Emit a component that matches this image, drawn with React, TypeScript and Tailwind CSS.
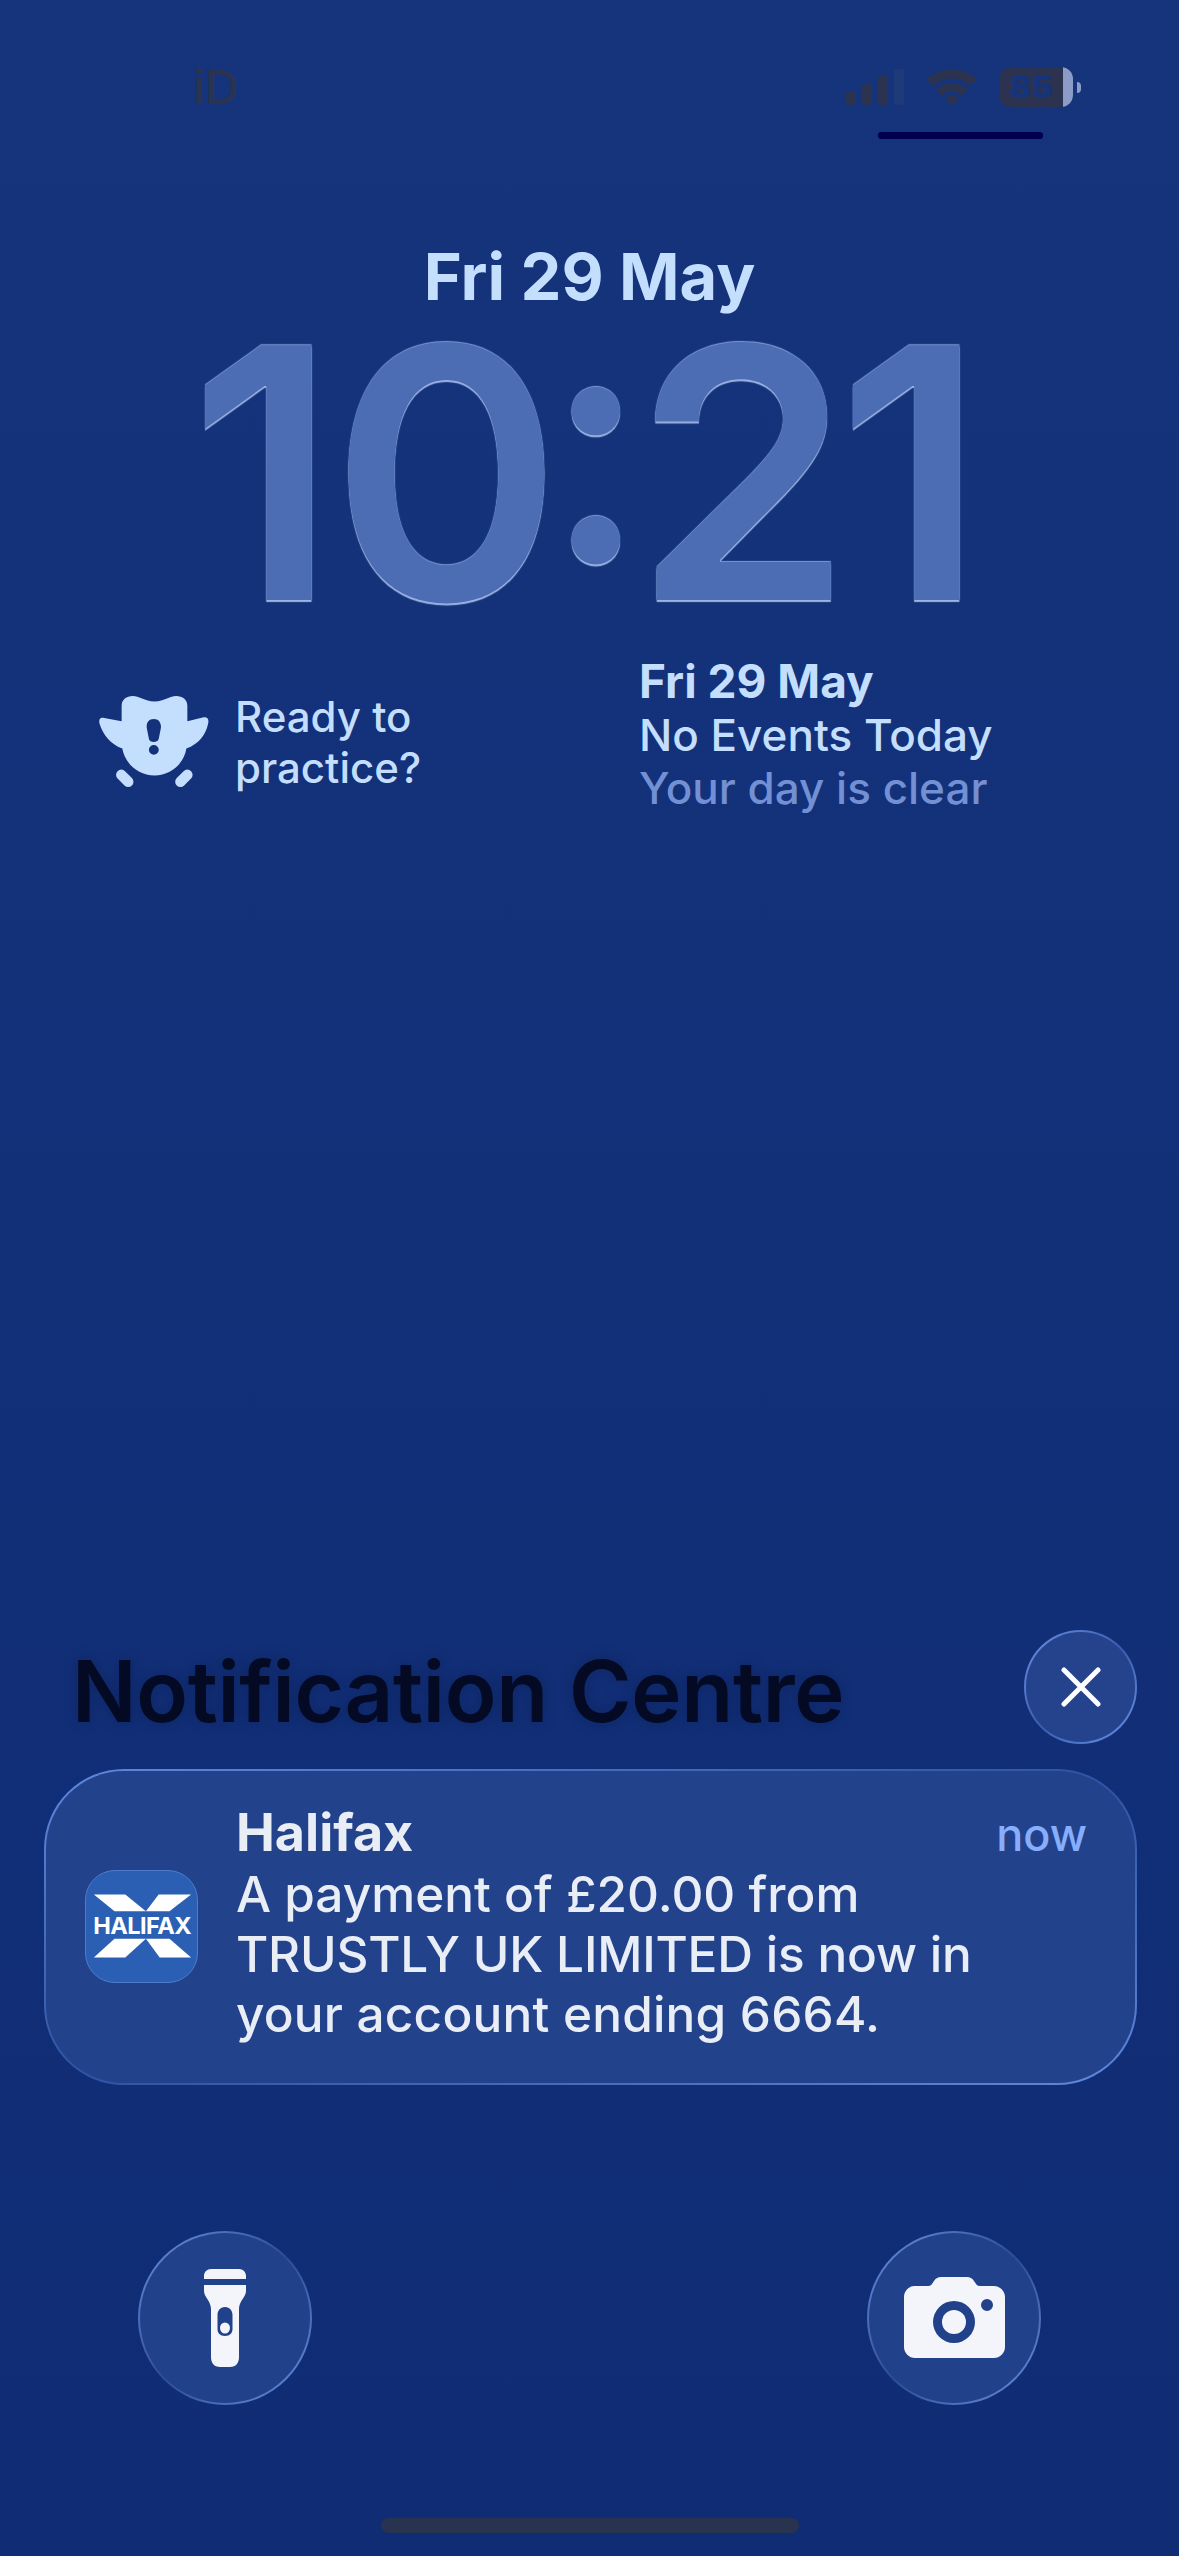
function SignalIcon() {
  return (
    <svg width="58" height="36" viewBox="0 0 58 36" className="block">
      <rect x="0" y="22" width="10" height="14" rx="3" fill="#2b3350" />
      <rect x="16" y="15" width="10" height="21" rx="3" fill="#2b3350" />
      <rect x="32" y="7" width="10" height="29" rx="3" fill="#2b3350" />
      <rect x="48" y="0" width="10" height="36" rx="3" fill="#1f3a79" />
    </svg>
  );
}

function WifiIcon() {
  return (
    <svg width="50" height="37" viewBox="0 0 50 37" className="block">
      <path d="M0 10 C14 -3 36 -3 50 10 L44 17 C32 7 18 7 6 17 Z" fill="#2b3350" />
      <path d="M9 20 C18 12 32 12 41 20 L35 27 C28 21 22 21 15 27 Z" fill="#2b3350" />
      <path d="M18 29 C22 26 28 26 32 29 L25 37 Z" fill="#2b3350" />
    </svg>
  );
}

function Battery() {
  return (
    <div className="flex items-center gap-[4px]">
      <div className="flex h-[40px] w-[74px] overflow-hidden rounded-[12px] bg-[#2b3350]">
        <div className="flex-1 text-center text-[32px] font-black leading-[40px] text-[#15347c]">85</div>
        <div className="w-[10px] bg-[#8b9cc8]" />
      </div>
      <div className="h-[11px] w-[4px] rounded-r-full bg-[#8b9cc8]" />
    </div>
  );
}

function PracticeIcon() {
  return (
    <svg width="112" height="92" viewBox="56 42 335 280" className="block shrink-0">
      <path
        fillRule="evenodd"
        fill="#c4defe"
        d="M125 75 C125 50 150 40 175 48 C195 55 210 62 225 62 C240 62 255 55 275 48 C300 40 325 50 325 75 L325 122 L375 110 C385 108 392 115 388 130 C380 165 360 190 322 205 C315 250 275 287 225 287 C175 287 135 250 127 205 C90 190 70 165 58 130 C54 115 60 108 72 112 L125 122 Z M223 115 C205 115 199 130 202 145 L208 175 C210 188 235 188 238 175 L244 145 C247 130 240 115 223 115 Z M223 194 A15 15 0 1 0 223 224 A15 15 0 1 0 223 194 Z"
      />
      <path d="M124 285 L145 306 M325 285 L304 306" stroke="#c4defe" strokeWidth="32" strokeLinecap="round" />
    </svg>
  );
}

function HalifaxLogo() {
  return (
    <div className="flex h-[113px] w-[113px] shrink-0 items-center justify-center rounded-[30px] border border-[#4f7cc9] bg-[#2a5fb4]">
      <svg width="113" height="113" viewBox="15 19 113 113" className="block">
        <polygon points="23,43 55,43 76,60 44,60" fill="#fff" />
        <polygon points="122,43 89,43 76,60 100,60" fill="#fff" />
        <polygon points="44,88 76,88 55,107 23,107" fill="#fff" />
        <polygon points="100,88 76,88 90,107 122,107" fill="#fff" />
        <text x="72.5" y="83" textAnchor="middle" fontSize="24" fontWeight="700" fill="#fff" fontFamily="Inter, sans-serif" textLength="100">
          HALIFAX
        </text>
      </svg>
    </div>
  );
}

function FlashIcon() {
  return (
    <svg width="42" height="98" viewBox="0 0 42 98" className="block">
      <path
        fillRule="evenodd"
        fill="#f3f5fa"
        d="M0 10 V7 C0 3 3 0 7 0 H35 C39 0 42 3 42 7 V10 Z M0 16 H42 V22 C42 28 35 32 35 40 V88 C35 94 32 98 26 98 H16 C10 98 7 94 7 88 V40 C7 32 0 28 0 22 Z M21 38 C16 38 13.500 42 13.500 46 V60 C13.500 64 16 67 21 67 C26 67 28.500 64 28.500 60 V46 C28.500 42 26 38 21 38 Z"
      />
      <ellipse cx="21" cy="59" rx="5" ry="5.500" fill="#f3f5fa" />
    </svg>
  );
}

function CameraIcon() {
  return (
    <svg width="101" height="81" viewBox="0 0 101 81" className="block">
      <path
        fillRule="evenodd"
        fill="#f3f5fa"
        d="M10 9 H24 C27 9 28 7 30 4 C32 1 34 0 37 0 H63 C66 0 68 1 70 4 C72 7 73 9 76 9 H90 C96 9 101 14 101 20 V70 C101 76 96 81 90 81 H11 C5 81 0 76 0 70 V20 C0 14 5 9 10 9 Z M50 24 A21 21 0 1 0 50 66 A21 21 0 1 0 50 24 Z M83 22 A6 6 0 1 0 83 34 A6 6 0 1 0 83 22 Z"
      />
      <circle cx="50" cy="45" r="12" fill="#f3f5fa" />
    </svg>
  );
}

function RoundButton({ children }: { children: React.ReactNode }) {
  return (
    <div className="h-[174px] w-[174px] rounded-full bg-gradient-to-br from-[#6d93e4] via-[#2d4c97] to-[#6d93e4] p-[2px]">
      <div className="flex h-full w-full items-center justify-center rounded-full bg-[#21418a]">{children}</div>
    </div>
  );
}

export default function App() {
  return (
    <div className="flex h-[2556px] w-[1179px] flex-col overflow-hidden bg-gradient-to-b from-[#15347c] to-[#0f2c75] font-['Inter',sans-serif]">
      {/* status bar */}
      <div className="flex h-[40px] items-center mt-[67px] pl-[193px] pr-[98px]">
        <span className="text-[47px] font-medium leading-[40px] text-[#2b3350]">iD</span>
        <div className="ml-auto flex items-center">
          <SignalIcon />
          <div className="ml-[23px] mr-[22px]">
            <WifiIcon />
          </div>
          <Battery />
        </div>
      </div>
      <div className="mt-[25px] mr-[136px] h-[7px] w-[165px] self-end rounded-[3px] bg-[#00004f]" />

      {/* date and clock */}
      <div className="mt-[106px] text-center text-[65px] font-bold leading-[64px] text-[#c4defe]">Fri 29 May</div>
      <div className="mt-[34px] flex h-[260px] pl-[189px] text-[350px] font-[560] leading-[260px] text-[#4c6cb3] [text-shadow:0_2px_1px_#9db4e3,0_-1px_1px_#7f99d4]">
        <span>1</span>
        <span className="-ml-[6px]">0</span>
        <span className="-ml-[17px] -translate-y-[33px] text-[336px] font-medium">:</span>
        <span className="-ml-[13px]">2</span>
        <span className="-ml-[15px]">1</span>
      </div>

      {/* widgets */}
      <div className="mt-[52px] flex text-[#c4defe]">
        <div className="flex w-[639px] shrink-0 items-start gap-[25px] pl-[98px] pt-[36px]">
          <div className="pt-[4px]">
            <PracticeIcon />
          </div>
          <div className="text-[42px] font-medium leading-[51px]">
            <div>Ready to</div>
            <div>practice?</div>
          </div>
        </div>
        <div className="text-[44px] font-medium leading-[53.5px]">
          <div className="text-[46px] font-bold">Fri 29 May</div>
          <div>No Events Today</div>
          <div className="text-[#7290d3]">Your day is clear</div>
        </div>
      </div>

      {/* notification centre header */}
      <div className="mt-[814px] flex h-[114px] pl-[72px] pr-[42px]">
        <div className="mt-[19px] text-[85px] font-semibold leading-[85px] tracking-[-0.3px] text-[#040a24] [text-shadow:0_0_14px_rgba(4,10,36,0.25)]">
          Notification Centre
        </div>
        <div className="ml-auto h-[114px] w-[113px] rounded-full bg-gradient-to-br from-[#6d93e4] via-[#3a5cae] to-[#6d93e4] p-[2px]">
          <div className="flex h-full w-full items-center justify-center rounded-full bg-[#24438c]">
            <svg width="40" height="40" viewBox="0 0 40 40">
              <path d="M3 3 L37 37 M37 3 L3 37" stroke="#fff" strokeWidth="5" strokeLinecap="round" />
            </svg>
          </div>
        </div>
      </div>

      {/* notification */}
      <div className="mt-[25px] ml-[44px] h-[316px] w-[1093px] rounded-[80px] bg-gradient-to-br from-[#6288dc] via-[#2f52a3] to-[#6288dc] p-[2px]">
        <div className="flex h-full w-full items-center gap-[38px] rounded-[78px] bg-[#23428c] pl-[39px] pr-[48px]">
          <HalifaxLogo />
          <div className="mb-[6px] flex-1 leading-[60px] text-[#e8edf6]">
            <div className="flex items-baseline justify-between">
              <span className="text-[52px] font-bold">Halifax</span>
              <span className="text-[45px] font-medium text-[#86aefc]">now</span>
            </div>
            <div className="-mt-[1px] text-[49.5px] font-medium">
              <div>A payment of £20.00 from</div>
              <div className="tracking-[-0.2px]">TRUSTLY UK LIMITED is now in</div>
              <div className="tracking-[0.2px]">your account ending 6664.</div>
            </div>
          </div>
        </div>
      </div>

      {/* lock screen buttons */}
      <div className="mt-[146px] flex justify-between pl-[138px] pr-[138px]">
        <RoundButton>
          <FlashIcon />
        </RoundButton>
        <RoundButton>
          <CameraIcon />
        </RoundButton>
      </div>

      <div className="mx-auto mt-[113px] h-[15px] w-[418px] rounded-[8px] bg-[#283350]" />
    </div>
  );
}
